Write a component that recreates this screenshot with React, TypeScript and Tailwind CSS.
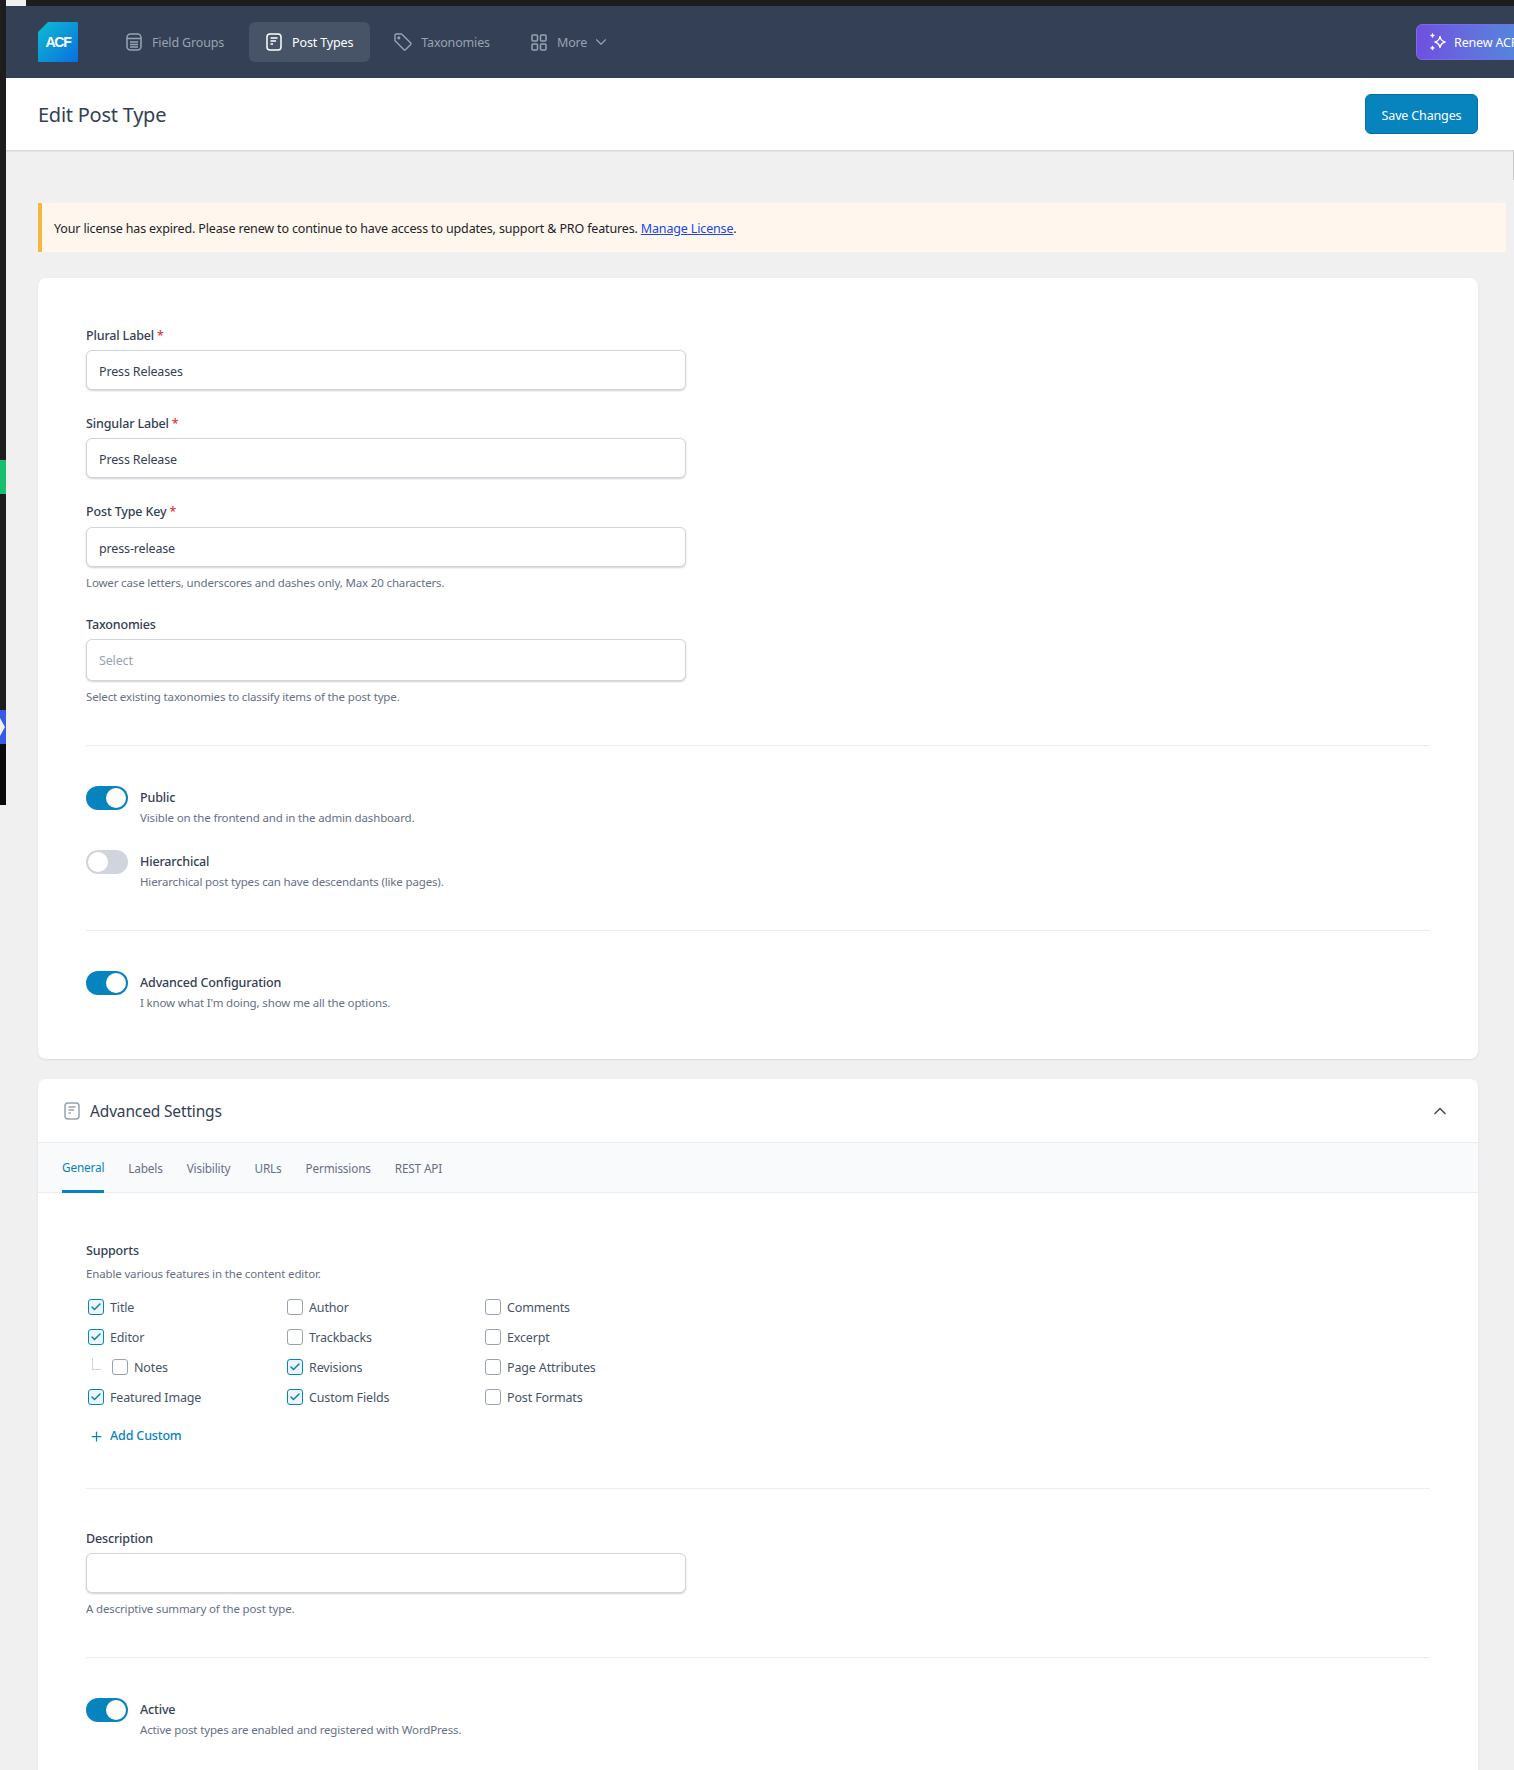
import { ChevronDown, ChevronUp, Plus, Check } from "lucide-react";

const font = "font-['Noto_Sans',sans-serif] tracking-[-0.15px]";

function Logo() {
  return (
    <svg width="40" height="40" viewBox="0 0 40 40" className="shrink-0">
      <defs>
        <linearGradient id="acf" x1="0" y1="0" x2="1" y2="1">
          <stop offset="0" stopColor="#0ebcd0" />
          <stop offset="1" stopColor="#0a6fe0" />
        </linearGradient>
      </defs>
      <path d="M10 0H39a1 1 0 0 1 1 1V39a1 1 0 0 1-1 1H1a1 1 0 0 1-1-1V10Z" fill="url(#acf)" />
      <text x="20" y="25" textAnchor="middle" fill="#fff" fontSize="14" fontWeight="800" letterSpacing="-1.2" fontFamily="'Liberation Sans', sans-serif">ACF</text>
    </svg>
  );
}

function DocIcon({ className = "" }: { className?: string }) {
  return (
    <svg width="16" height="18" viewBox="0 0 16 18" fill="none" stroke="currentColor" strokeWidth="1.5" className={`shrink-0 ${className}`}>
      <rect x="1" y="1" width="14" height="16" rx="3" />
      <path d="M4.500 5h7M4.500 8h5.500M4.500 11h2.500" />
    </svg>
  );
}

function GroupsIcon() {
  return (
    <svg width="16" height="18" viewBox="0 0 16 18" fill="none" stroke="currentColor" strokeWidth="1.5" className="shrink-0">
      <rect x="1" y="1" width="14" height="16" rx="3.500" />
      <path d="M1 5.500h14M4 9h8M4 11.500h8M4 14h8" />
    </svg>
  );
}

function TagIcon() {
  return (
    <svg width="18" height="18" viewBox="0 0 18 18" fill="none" stroke="currentColor" strokeWidth="1.4" strokeLinejoin="round" className="shrink-0">
      <path d="M1 2.200 1 7.300a1 1 0 0 0 .3.700l8.700 8.800a1 1 0 0 0 1.400 0l5.300-5.300a1 1 0 0 0 0-1.400L7.900 1.300a1 1 0 0 0-.7-.3H2.200A1.200 1.200 0 0 0 1 2.200Z" />
      <circle cx="4.800" cy="4.800" r="0.900" />
    </svg>
  );
}

function GridIcon() {
  return (
    <svg width="16" height="17" viewBox="0 0 16 17" fill="none" stroke="currentColor" strokeWidth="1.500" className="shrink-0">
      <rect x="1" y="1" width="5.500" height="6" rx="1" />
      <rect x="9.500" y="1" width="5.500" height="6" rx="1" />
      <rect x="1" y="10" width="5.500" height="6" rx="1" />
      <rect x="9.500" y="10" width="5.500" height="6" rx="1" />
    </svg>
  );
}

function SparkIcon() {
  return (
    <svg width="18" height="18" viewBox="0 0 18 18" fill="none" stroke="currentColor" strokeWidth="1.4" strokeLinejoin="round" strokeLinecap="round" className="shrink-0">
      <path d="M11 3.500c.5 3 1.500 4.500 5 5.500-3.500 1-4.500 2.500-5 5.500-.5-3-1.500-4.500-5-5.500 3.500-1 4.500-2.500 5-5.500Z" />
      <path d="M3.500 1v3M2 2.500h3M3.500 13.500v3M2 15h3" />
    </svg>
  );
}

function Field({ label, required, value, placeholder, help, className = "", tall, gap = "mt-[6px]", helpGap = "mt-[7px]" }: { label: string; required?: boolean; value?: string; placeholder?: string; help?: string; className?: string; tall?: boolean; gap?: string; helpGap?: string }) {
  return (
    <div className={className}>
      <div className="h-[18px] text-[12.5px] leading-[20px] font-medium text-[#344055]">
        {label}
        {required && <span className="text-[#d63638]"> *</span>}
      </div>
      <div className={`${gap} w-[600px] ${tall ? "h-[42px] pt-[2px]" : "h-[40px] pt-[4px]"} px-3 flex items-center rounded-[6px] border border-[#d0d5dd] bg-white shadow-[0_1px_2px_rgba(16,24,40,0.2)] text-[12.5px] ${placeholder ? "text-[#98a2b3]" : "text-[#344055]"}`}>
        {value || placeholder}
      </div>
      {help && <p className={`${helpGap} h-[18px] text-[11.5px] leading-[18px] text-[#667085]`}>{help}</p>}
    </div>
  );
}

function Toggle({ on, title, desc, className = "" }: { on?: boolean; title: string; desc: string; className?: string }) {
  return (
    <div className={`flex items-start ${className}`}>
      <span className={`w-[42px] h-[24px] rounded-full p-[2px] flex ${on ? "bg-[#0783be] justify-end" : "bg-[#d0d5dd] justify-start"}`}>
        <span className="w-5 h-5 rounded-full bg-white block" />
      </span>
      <div className="ml-3">
        <div className="text-[12.5px] leading-[24px] font-medium text-[#344055] h-[23px]">{title}</div>
        <div className="text-[11.5px] leading-[18px] text-[#667085]">{desc}</div>
      </div>
    </div>
  );
}

function Box({ label, on }: { label: string; on?: boolean }) {
  return (
    <label className="flex items-center h-[30px] text-[12.5px] text-[#475467]">
      <span className={`w-[16px] h-[16px] mb-[2px] mr-[6px] rounded-[3px] border flex items-center justify-center ${on ? "border-[#0783be] bg-[#ebf5fa]" : "border-[#98a2b3] bg-white"}`}>
        {on && <Check size={12} strokeWidth={3} className="text-[#0783be]" />}
      </span>
      {label}
    </label>
  );
}

const tabs = ["Labels", "Visibility", "URLs", "Permissions", "REST API"];

export default function App() {
  return (
    <div className={`${font} relative flex w-[1514px] h-[1770px] overflow-hidden bg-[#f0f0f1]`}>
      {/* window edge left of the admin */}
      <div className="w-[6px] h-[805px] shrink-0 flex flex-col bg-[#1d1d1d]">
        <div className="h-[460px]" />
        <div className="h-[34px] bg-[#17bf6f]" />
        <div className="h-[216px]" />
        <svg width="6" height="34" viewBox="0 0 6 34" className="block shrink-0">
          <rect width="6" height="34" fill="#3858e9" />
          <path d="M0 8 5 17 0 26Z" fill="#f0f0f1" />
        </svg>
        <div className="flex-1 bg-[#0a0a0a]" />
      </div>

      <div className="flex-1 min-w-0 flex flex-col">
        <div className="h-[6px] bg-[#1d1d1d] shrink-0" />

        <nav className="h-[72px] shrink-0 bg-[#344055] flex items-center pl-[32px] text-[12.5px] text-[#98a2b3]">
          <Logo />
          <a className="ml-[32px] h-[38px] px-4 flex items-center gap-[10px]"><GroupsIcon /><span className="pt-[2px]">Field Groups</span></a>
          <a className="ml-[9px] h-[40px] px-[17px] rounded-[6px] bg-[#475467] text-white flex items-center gap-[10px]"><DocIcon /><span className="pt-[2px]">Post Types</span></a>
          <a className="ml-[8px] h-[38px] px-4 flex items-center gap-[9px]"><TagIcon /><span className="pt-[2px]">Taxonomies</span></a>
          <a className="ml-[9px] h-[38px] px-4 flex items-center gap-[10px]"><GridIcon /><span className="pt-[2px]">More</span><ChevronDown size={18} strokeWidth={1.5} className="-ml-[5px]" /></a>
          <a className="ml-auto -mr-[60px] w-[158px] shrink-0 h-[36px] pl-[12px] rounded-[6px] border border-[#7a6ce6] bg-gradient-to-r from-[#6f4fe0] to-[#2f9fd8] text-white flex items-center gap-[7px]"><SparkIcon /><span className="pt-[2px] whitespace-nowrap">Renew ACF PRO</span></a>
        </nav>

        <header className="h-[72px] shrink-0 bg-white flex items-center justify-between pl-[32px] pr-[36px] shadow-[0_1px_2px_rgba(16,24,40,0.15)]">
          <h1 className="pt-[2px] text-[20px] tracking-[-0.25px] text-[#344055]">Edit Post Type</h1>
          <button className="h-[40px] w-[113px] pt-[4px] rounded-[6px] bg-[#0783be] border border-[#0670a3] text-[12.5px] text-white">Save Changes</button>
        </header>

        <div className="mt-[53px] ml-[32px] mr-[8px] h-[49px] shrink-0 flex items-center pl-[12px] pt-[4px] bg-[#fff7ed] border-l-[4px] border-[#f5b83d] text-[12.5px] text-[#1d2327]">
          <span>Your license has expired. Please renew to continue to have access to updates, support &amp; PRO features. <a className="text-[#2145e6] underline">Manage License</a>.</span>
        </div>

        <section className="mt-[26px] ml-[32px] mr-[36px] h-[781px] shrink-0 rounded-[8px] bg-white shadow-[0_1px_2px_rgba(16,24,40,0.1)] px-[48px] pt-[48px]">
          <Field label="Plural Label" required value="Press Releases" />
          <Field className="mt-[24px]" label="Singular Label" required value="Press Release" />
          <Field className="mt-[24px]" gap="mt-[7px]" label="Post Type Key" required value="press-release" help="Lower case letters, underscores and dashes only, Max 20 characters." />
          <Field className="mt-[23px]" label="Taxonomies" placeholder="Select" tall help="Select existing taxonomies to classify items of the post type." />
          <hr className="mt-[39px] border-[#eaecf0]" />
          <Toggle on className="mt-[40px]" title="Public" desc="Visible on the frontend and in the admin dashboard." />
          <Toggle className="mt-[23px]" title="Hierarchical" desc="Hierarchical post types can have descendants (like pages)." />
          <hr className="mt-[39px] border-[#eaecf0]" />
          <Toggle on className="mt-[40px]" title="Advanced Configuration" desc="I know what I'm doing, show me all the options." />
        </section>

        <section className="mt-[20px] ml-[32px] mr-[36px] flex-1 rounded-t-[8px] bg-white shadow-[0_1px_2px_rgba(16,24,40,0.1)]">
          <div className="h-[64px] pl-[26px] pr-[28px] flex items-center text-[#344055] border-b border-[#eaecf0]">
            <DocIcon className="text-[#98a2b3]" />
            <h2 className="ml-[10px] pt-[2px] text-[15.5px]">Advanced Settings</h2>
            <ChevronUp size={20} className="ml-auto text-[#475467]" />
          </div>
          <div className="h-[50px] pl-[24px] flex gap-[24px] bg-[#f9fafb] border-b border-[#eaecf0] text-[11.75px] text-[#667085]">
            <a className="h-[50px] pt-[2px] flex items-center border-b-[3px] border-[#0783be] text-[#0783be]">General</a>
            {tabs.map((t) => (
              <a key={t} className="pt-[2px] flex items-center">{t}</a>
            ))}
          </div>
          <div className="px-[48px] pt-[48px]">
            <div className="h-[18px] text-[12.5px] leading-[20px] font-medium text-[#344055]">Supports</div>
            <p className="mt-[6px] text-[11.5px] leading-[18px] text-[#667085]">Enable various features in the content editor.</p>
            <div className="mt-[10px] flex pl-[2px]">
              <div className="w-[199px]">
                <Box on label="Title" />
                <Box on label="Editor" />
                <div className="flex items-center">
                  <span className="ml-[4px] mb-[8px] w-[9px] h-[12px] mr-[11px] border-l border-b border-[#d0d5dd]" />
                  <Box label="Notes" />
                </div>
                <Box on label="Featured Image" />
              </div>
              <div className="w-[198px]">
                <Box label="Author" />
                <Box label="Trackbacks" />
                <Box on label="Revisions" />
                <Box on label="Custom Fields" />
              </div>
              <div>
                <Box label="Comments" />
                <Box label="Excerpt" />
                <Box label="Page Attributes" />
                <Box label="Post Formats" />
              </div>
            </div>
            <a className="mt-[11px] ml-[3px] flex items-center gap-[6px] h-[24px] text-[12.5px] font-medium text-[#0783be]"><Plus size={15} />Add Custom</a>
            <hr className="mt-[40px] border-[#eaecf0]" />
            <Field className="mt-[40px]" label="Description" />
            <p className="mt-[7px] text-[11.5px] leading-[18px] text-[#667085]">A descriptive summary of the post type.</p>
            <hr className="mt-[39px] border-[#eaecf0]" />
            <Toggle on className="mt-[40px]" title="Active" desc="Active post types are enabled and registered with WordPress." />
          </div>
        </section>
      </div>

      {/* top tab and sliver of the scrollbar */}
      <div className="absolute left-[6px] top-0 w-[20px] h-[6px] bg-[#f0f0f1]" />
      <div className="absolute right-0 top-[150px] w-px h-[30px] bg-[#c9c9ca]" />
    </div>
  );
}
